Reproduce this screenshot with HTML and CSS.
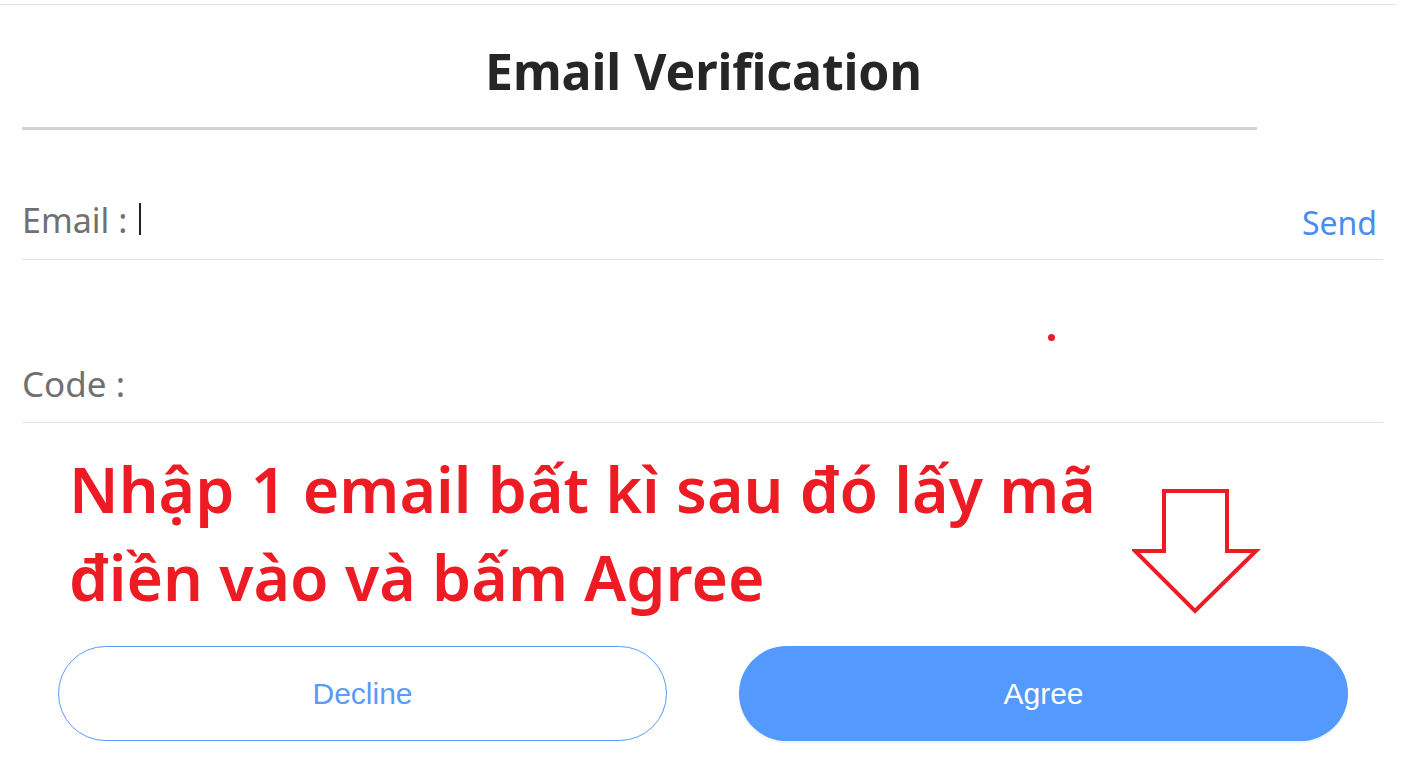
FILE: index.html
```html
<!DOCTYPE html>
<html lang="vi">
<head>
<meta charset="utf-8">
<title>Email Verification</title>
<link rel="stylesheet" href="styles.css">
</head>
<body>
<div class="page">
  <header class="head">
    <h1 class="title">Email Verification</h1>
  </header>
  <div class="rule"></div>
  <div class="form">
    <div class="row row-email">
      <span class="label">Email :</span>
      <span class="caret"></span>
      <span class="fill"></span>
      <span class="send">Send</span>
    </div>
    <div class="row row-code">
      <span class="label">Code :</span>
      <span class="fill"></span>
      <span class="dot"></span>
    </div>
  </div>
  <div class="note">
    <p class="note-text">Nhập 1 email bất kì sau đó lấy mã<br>điền vào và bấm Agree</p>
    <svg class="arrow" width="130" height="126" viewBox="0 0 130 126">
      <path d="M32 2 H95 V62 H124 L63 122 L3 62 H32 Z" fill="none" stroke="#ed1c24" stroke-width="4" stroke-linejoin="miter"/>
    </svg>
  </div>
  <div class="buttons">
    <button class="btn btn-decline">Decline</button>
    <button class="btn btn-agree">Agree</button>
  </div>
</div>
</body>
</html>
```
FILE: styles.css
```css
* { box-sizing: border-box; }
html, body { margin: 0; padding: 0; background: #fff; }
body { font-family: "Noto Sans", "Open Sans", sans-serif; }
.page {
  width: 1408px;
  height: 761px;
  padding-top: 4px;
  position: relative;
  overflow: hidden;
}
.head {
  width: 1397px;
  border-top: 1px solid #e3e3e3;
  height: 123px;
  display: flex;
  align-items: center;
  justify-content: center;
}
.title {
  margin: 0;
  font-size: 50px;
  font-weight: 700;
  color: #262626;
  letter-spacing: -0.1px;
  padding-left: 10px;
  padding-top: 10px;
}
.rule {
  margin-left: 22px;
  width: 1235px;
  height: 3px;
  background: #d2d2d2;
}
.form {
  margin-left: 22px;
  width: 1361px;
}
.row {
  display: flex;
  align-items: flex-end;
  border-bottom: 1px solid #e1e1e1;
  position: relative;
}
.row-email { height: 130px; padding-bottom: 19px; }
.row-code { height: 163px; padding-bottom: 18px; }
.label {
  font-size: 34px;
  color: #707070;
  line-height: 40px;
}
.row-code .label { font-size: 35px; }
.caret {
  width: 1.5px;
  height: 32px;
  background: #222;
  margin-left: 12px;
  margin-bottom: 5px;
}
.fill { flex: 1; }
.send {
  font-size: 32px;
  color: #4a8cf0;
  line-height: 40px;
  margin-right: 6px;
  margin-bottom: -3px;
}
.dot {
  position: absolute;
  left: 1026px;
  top: 74px;
  width: 7px;
  height: 7px;
  border-radius: 50%;
  background: #ed1c24;
}
.note {
  position: relative;
  height: 223px;
}
.note-text {
  margin: 0;
  padding: 22px 0 0 69px;
  font-size: 62.6px;
  font-weight: 600;
  line-height: 88px;
  color: #ed1c24;
}
.arrow {
  position: absolute;
  left: 1132px;
  top: 66px;
}
.buttons {
  display: flex;
  gap: 72px;
  padding-left: 58px;
}
.btn {
  width: 609px;
  height: 95px;
  border-radius: 48px;
  font-family: "Liberation Sans", Arial, sans-serif;
  font-size: 30px;
  padding: 0;
  cursor: pointer;
}
.btn-decline {
  background: #fff;
  border: 1px solid #5a9af8;
  color: #5a9af8;
}
.btn-agree {
  background: #5399fe;
  border: none;
  color: #fff;
  box-shadow: 0 2px 2px rgba(0,0,0,0.06);
}
```
